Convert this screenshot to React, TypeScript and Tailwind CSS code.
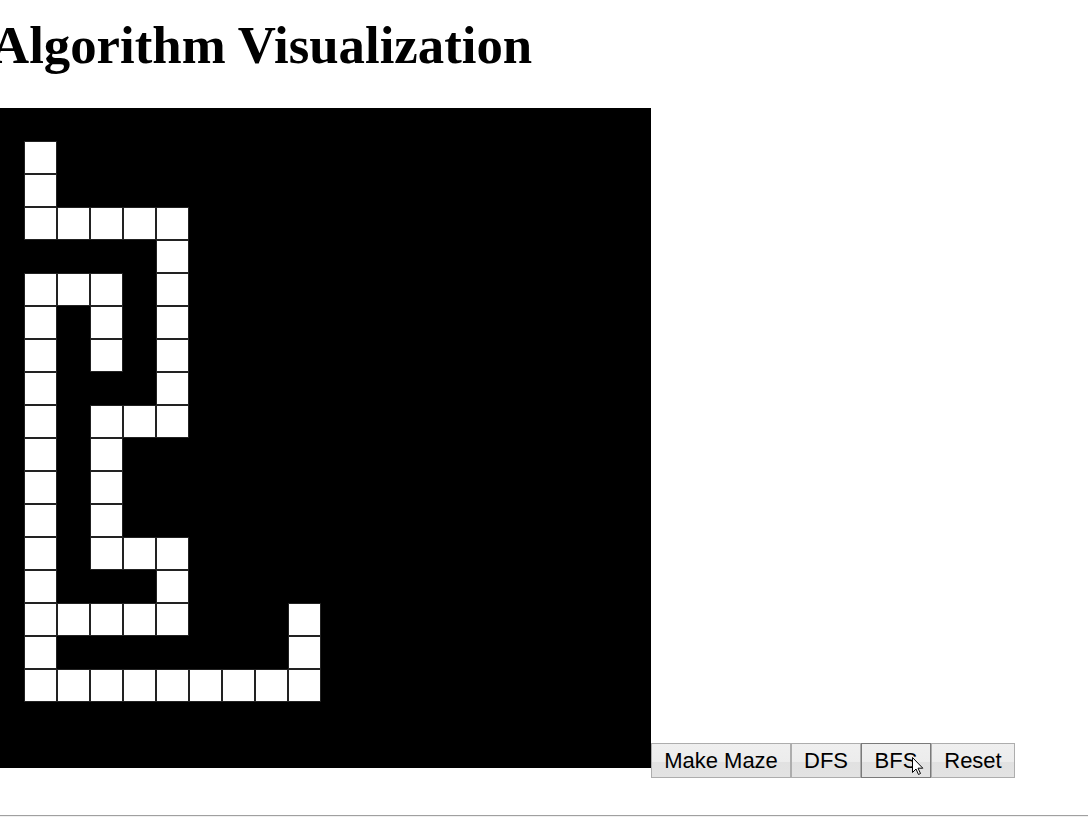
import React from "react";

const rows: string[] = [
  "....................",
  ".#..................",
  ".#..................",
  ".#####..............",
  ".....#..............",
  ".###.#..............",
  ".#.#.#..............",
  ".#.#.#..............",
  ".#...#..............",
  ".#.###..............",
  ".#.#................",
  ".#.#................",
  ".#.#................",
  ".#.###..............",
  ".#...#..............",
  ".#####...#..........",
  ".#.......#..........",
  ".#########..........",
  "....................",
  "....................",
];

function Maze() {
  return (
    <div className="inline-block align-baseline overflow-hidden w-[660px] h-[660px] bg-black">
      <div className="w-[660px] h-[660px] grid grid-cols-[repeat(20,33px)] grid-rows-[repeat(20,33px)]">
        {rows.flatMap((row, r) =>
          row.split("").map((ch, c) =>
            ch === "#" ? (
              <div key={`${r}-${c}`} className="bg-white border border-[#222]" />
            ) : (
              <div key={`${r}-${c}`} />
            )
          )
        )}
      </div>
    </div>
  );
}

function Btn({ label, w, hover }: { label: string; w: string; hover?: boolean }) {
  return (
    <button
      className={
        "relative inline-block align-baseline text-center py-[4px] text-[22px] leading-[25px] text-black border bg-[linear-gradient(#efefef_0%,#ececec_55%,#e1e1e1_56%,#e3e3e3_100%)] " +
        w +
        " " +
        (hover ? "border-[#7a7a7a]" : "border-[#adadad]")
      }
      style={{ fontFamily: '"Liberation Sans", Arial, sans-serif' }}
    >
      {label}
      {hover ? (
        <svg
          className="absolute left-[50px] top-[13px]"
          width="12"
          height="19"
          viewBox="0 0 12 19"
        >
          <path
            d="M0.5 0.5 L0.5 15.5 L4 12 L6.5 17.5 L8.5 16.5 L6 11.2 L10.8 11.2 Z"
            fill="#fff"
            stroke="#000"
            strokeWidth="1"
          />
        </svg>
      ) : null}
    </button>
  );
}

export default function App() {
  return (
    <div className="relative w-[1088px] h-[817px] overflow-hidden bg-white">
      <div className="-ml-[9px]">
        <h1
          className="pt-[16px] h-[108px] text-[52.8px] leading-[58px] font-bold text-black whitespace-nowrap"
          style={{ fontFamily: '"Liberation Serif", "Times New Roman", serif' }}
        >
          Algorithm Visualization
        </h1>
        <div className="whitespace-nowrap text-[22px] leading-[25px]">
          <Maze />
          <Btn label="Make Maze" w="w-[140px]" />
          <Btn label="DFS" w="w-[70px]" />
          <Btn label="BFS" w="w-[70px]" hover />
          <Btn label="Reset" w="w-[84px]" />
        </div>
      </div>
      <div className="absolute left-0 right-0 top-[815px] h-[1px] bg-[#a0a0a0]" />
      <div className="absolute left-0 right-0 top-[816px] h-[1px] bg-[#f0f0f0]" />
    </div>
  );
}
